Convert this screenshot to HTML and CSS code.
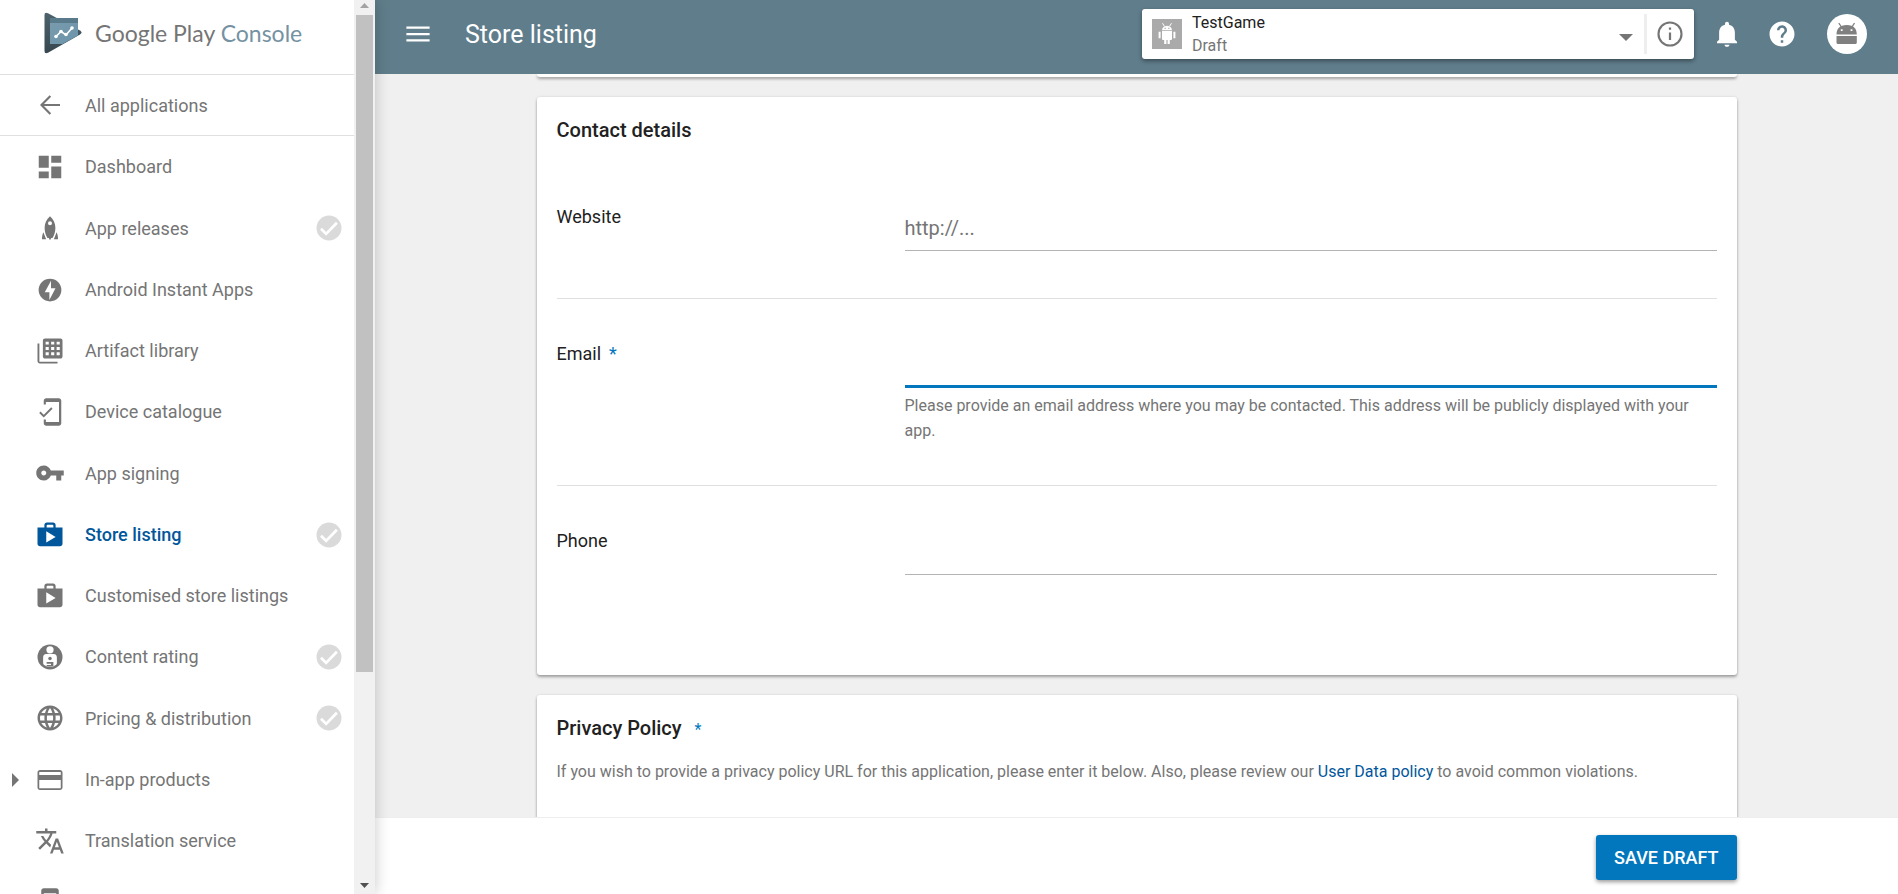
FILE: index.html
```html
<!DOCTYPE html>
<html lang="en-GB">
<head>
<meta charset="utf-8">
<title>Store listing - Google Play Console</title>
<link rel="stylesheet" href="styles.css">
</head>
<body>
<svg class="defs" aria-hidden="true">
  <symbol id="check" viewBox="0 0 24 24"><circle cx="12" cy="12" r="10" fill="#dadada"/><path d="M5.600 12.600l4.100 4.100 8.600-8.900" fill="none" stroke="#fff" stroke-width="2.200"/></symbol>
  <symbol id="shop" viewBox="0 0 24 24"><path fill-rule="evenodd" d="M16.500 6V4c0-1.110-.89-2-2-2h-5c-1.110 0-2 .89-2 2v2H2v13c0 1.110.89 2 2 2h16c1.110 0 2-.89 2-2V6zM9.300 5.900V4.600q0-.8.8-.8h3.800q.8 0 .8.8v1.300zM9 18V9l7.500 4.500z"/></symbol>
</svg>
<div class="shell">
  <aside class="sidebar">
    <div class="sidebar-content">
      <a class="brand" href="#">
        <svg class="brand-mark" viewBox="0 0 38 42" aria-hidden="true">
          <defs><linearGradient id="dark" x1="0" y1="0" x2="0" y2="1"><stop offset="0" stop-color="#4d626c"/><stop offset="1" stop-color="#37474f"/></linearGradient><linearGradient id="pane" x1="0" y1="0" x2="1" y2="1"><stop offset="0" stop-color="#7a9bad"/><stop offset="1" stop-color="#6b94ab"/></linearGradient></defs>
          <path fill="url(#dark)" d="M.500 3Q.5-.5 4 1.200L36 18.500Q39 20.500 36 22.500L4 40.800Q.5 42.300.5 39z"/>
          <path fill="url(#pane)" d="M6 6h28v17.500L18.500 32H6z"/><path fill="#587a8b" d="M6 6h28v5H6z"/>
          <path d="M12 24.500l5-5 5 3.500 6-7" fill="none" stroke="#fff" stroke-width="1.600"/><g fill="#fff"><circle cx="12" cy="24.500" r="1.800"/><circle cx="17" cy="19.500" r="1.800"/><circle cx="22" cy="22.500" r="1.800"/><circle cx="28" cy="16" r="1.800"/></g>
        </svg>
        <span class="brand-name">Google Play <span class="brand-product">Console</span></span>
      </a>
      <a class="nav-item nav-back" href="#">
        <svg class="icon" viewBox="0 0 24 24"><path d="M20 12H5.300M12.300 4.800L5.200 12l7.100 7.200" fill="none" stroke="currentColor" stroke-width="1.700"/></svg>
        <span>All applications</span>
      </a>
      <nav class="nav">
        <a class="nav-item" href="#"><svg class="icon" viewBox="0 0 24 24"><path d="M3 12.500h8V3H3zM3 21h8v-5.500H3zM13 21h8V11.500h-8zM13 3v5.500h8V3z"/></svg><span>Dashboard</span></a>
        <a class="nav-item" href="#"><svg class="icon" viewBox="0 0 24 24"><path fill-rule="evenodd" d="M12 2.500c2.800 2.500 4.300 5.700 4.300 9.300 0 3-.8 5.800-2.300 8.200h-4c-1.500-2.400-2.300-5.200-2.300-8.200C7.700 8.200 9.200 5 12 2.500zM12 6.600a1.600 1.600 0 1 0 0 3.200 1.600 1.600 0 0 0 0-3.200z"/><path d="M6.700 15.300L8.900 21H5.600c0-2 .2-4 1.100-5.700zM17.300 15.300L15.100 21h3.300c0-2-.2-4-1.100-5.700zM10.500 19h3l-1.500 2.800z"/></svg><span>App releases</span><svg class="icon status" role="img" aria-label="Complete"><use href="#check"/></svg></a>
        <a class="nav-item" href="#"><svg class="icon" viewBox="0 0 24 24"><path fill-rule="evenodd" d="M12 2.900a9.100 9.100 0 1 0 0 18.200 9.100 9.100 0 0 0 0-18.200zM11.500 20v-6.300H7.800L12.800 4.500v6h3.600z"/></svg><span>Android Instant Apps</span></a>
        <a class="nav-item" href="#"><svg class="icon" viewBox="0 0 24 24"><path d="M3.500 6H2v14c0 1.100.9 2 2 2h14v-1.500H3.500z"/><path fill-rule="evenodd" d="M8 2h12.300c1 0 1.700.7 1.700 1.700V16.300c0 1-.7 1.700-1.700 1.700H8c-1 0-1.700-.7-1.700-1.700V3.700C6.300 2.700 7 2 8 2zM8.500 4.500v2.300h2.500V4.500zM12.900 4.500v2.300h2.500V4.500zM17.300 4.500v2.300h2.500V4.500zM8.500 8.700v2.400h2.500V8.700zM12.900 8.700v2.400h2.500V8.700zM17.300 8.700v2.400h2.500V8.700zM8.500 13v2.400h2.500V13zM12.900 13v2.400h2.500V13zM17.300 13v2.400h2.500V13z"/></svg><span>Artifact library</span></a>
        <a class="nav-item" href="#"><svg class="icon" viewBox="0 0 24 24"><path d="M19 1H9c-1.100 0-2 .9-2 2v3h1.700V4H19.200v16H8.700v-2H7v3c0 1.100.9 2 2 2h10c1.100 0 2-.9 2-2V3c0-1.100-.9-2-2-2z"/><path d="M3.900 12.200L7 15.300l6.500-6.500" fill="none" stroke="currentColor" stroke-width="1.500"/></svg><span>Device catalogue</span></a>
        <a class="nav-item" href="#"><svg class="icon" viewBox="0 0 24 24"><path d="M12.650 10C11.830 7.670 9.610 6 7 6c-3.310 0-6 2.690-6 6s2.690 6 6 6c2.610 0 4.830-1.670 5.650-4H17v4h4v-4h2v-4H12.650zM7 14c-1.100 0-2-.9-2-2s.9-2 2-2 2 .9 2 2-.9 2-2 2z"/></svg><span>App signing</span></a>
        <a class="nav-item current" href="#" aria-current="page"><svg class="icon"><use href="#shop"/></svg><span>Store listing</span><svg class="icon status" role="img" aria-label="Complete"><use href="#check"/></svg></a>
        <a class="nav-item" href="#"><svg class="icon"><use href="#shop"/></svg><span>Customised store listings</span></a>
        <a class="nav-item" href="#"><svg class="icon" viewBox="0 0 24 24"><circle cx="12" cy="12" r="10"/><circle cx="12" cy="6.200" r="2.900" fill="#fff"/><path fill="#fff" d="M9 9.600h6c1.600 0 2.500 1.200 2.500 2.800v4.300c0 1.200-.9 1.900-2 2.200-1 1.300-6 1.300-7 0-1.100-.3-2-1-2-2.200v-4.300c0-1.600.9-2.800 2.500-2.800z"/><circle cx="12" cy="13.200" r="1.400"/><path d="M9.300 16h5.400v3.600H9.300v-1.300h3.500v-.9H9.300z"/></svg><span>Content rating</span><svg class="icon status" role="img" aria-label="Complete"><use href="#check"/></svg></a>
        <a class="nav-item" href="#"><svg class="icon" viewBox="0 0 24 24"><path d="M11.990 2C6.470 2 2 6.480 2 12s4.470 10 9.990 10C17.520 22 22 17.520 22 12S17.520 2 11.990 2zm6.930 6h-2.950c-.32-1.250-.78-2.450-1.380-3.560 1.840.63 3.370 1.910 4.330 3.560zM12 4.040c.83 1.200 1.480 2.530 1.910 3.960h-3.820c.43-1.430 1.080-2.760 1.910-3.960zM4.260 14C4.100 13.360 4 12.690 4 12s.1-1.360.26-2h3.380c-.08.66-.14 1.320-.14 2 0 .68.060 1.340.14 2H4.260zm.82 2h2.950c.32 1.250.78 2.450 1.380 3.560-1.840-.63-3.370-1.900-4.330-3.560zm2.950-8H5.080c.96-1.660 2.490-2.930 4.330-3.560C8.810 5.550 8.350 6.750 8.030 8zM12 19.960c-.83-1.200-1.480-2.530-1.910-3.960h3.820c-.43 1.430-1.080 2.760-1.910 3.960zM14.340 14H9.660c-.09-.66-.16-1.320-.16-2 0-.68.070-1.350.16-2h4.680c.09.65.16 1.320.16 2 0 .68-.07 1.340-.16 2zm.25 5.560c.6-1.110 1.060-2.310 1.380-3.560h2.950c-.96 1.650-2.490 2.930-4.330 3.560zM16.360 14c.08-.66.14-1.320.14-2 0-.68-.06-1.340-.14-2h3.380c.16.640.26 1.310.26 2s-.1 1.360-.26 2h-3.380z"/></svg><span>Pricing &amp; distribution</span><svg class="icon status" role="img" aria-label="Complete"><use href="#check"/></svg></a>
        <a class="nav-item" href="#"><svg class="expander" viewBox="0 0 7 14"><path d="M0 0l7 7-7 7z"/></svg><svg class="icon" viewBox="0 0 24 24"><path d="M20 4H4c-1.110 0-1.990.89-1.990 2L2 18c0 1.110.89 2 2 2h16c1.110 0 2-.89 2-2V6c0-1.110-.89-2-2-2zm.600 14.600H3.400V12h17.200v6.600zm0-10.600H3.400V5.500h17.200V8z"/></svg><span>In-app products</span></a>
        <a class="nav-item" href="#"><svg class="icon" viewBox="0 0 24 24"><path d="M12.870 15.070l-2.540-2.510.03-.03c1.740-1.940 2.980-4.170 3.710-6.530H17V4h-7V2H8v2H1v1.990h11.170C11.500 7.920 10.440 9.750 9 11.350 8.070 10.320 7.300 9.190 6.690 8h-2c.73 1.630 1.730 3.170 2.980 4.560l-5.090 5.020L4 19l5-5 3.110 3.110.76-2.040zM18.500 10h-2L12 22h2l1.120-3h4.750L21 22h2l-4.500-12zm-2.620 7l1.620-4.330L19.120 17h-3.240z"/></svg><span>Translation service</span></a>
        <a class="nav-item" href="#"><svg class="icon" viewBox="0 0 24 24"><path d="M17 1H7c-1.100 0-2 .9-2 2v18c0 1.100.9 2 2 2h10c1.100 0 2-.9 2-2V3c0-1.100-.9-2-2-2zm0 18H7V5h10z"/></svg></a>
      </nav>
    </div>
    <div class="scrollbar" aria-hidden="true">
      <svg class="scroll-arrow" viewBox="0 0 21 15"><path d="M6 8l4.500-5L15 8z" fill="#a3a3a3"/></svg>
      <div class="scroll-track"><div class="scroll-thumb"></div></div>
      <svg class="scroll-arrow" viewBox="0 0 21 15"><path d="M6 4l4.500 5L15 4z" fill="#505050"/></svg>
    </div>
  </aside>
  <div class="page">
    <header class="topbar">
      <button class="icon-button" type="button" aria-label="Menu"><svg class="icon" viewBox="0 0 24 24"><path d="M2.700 6h18.600v1.800H2.700zM2.700 11.100h18.600v1.800H2.700zM2.700 16.200h18.600V18H2.700z"/></svg></button>
      <h1 class="title">Store listing</h1>
      <div class="app-picker">
        <button class="app-select" type="button" aria-haspopup="listbox">
          <svg class="app-icon" viewBox="0 0 30 30"><path fill="#aaa" d="M0 0h30v30H0z"/><g fill="#fff"><path fill-rule="evenodd" d="M10 11.200q.3-4 5-4.400 4.700.4 5 4.400zM12.600 8.800v1.100h1.100V8.800zM16.300 8.800v1.100h1.100V8.800z"/><path d="M10 12h10v8q0 1-1 1h-1.200v4h-2.200v-4h-1.200v4h-2.200v-4H11q-1 0-1-1zM6.600 12.700h2v6.500h-2zM21.400 12.700h2v6.500h-2z"/><path d="M10.500 4.200l2 3.200M19.500 4.200l-2 3.200" stroke="#fff"/></g></svg>
          <span class="app-text"><span class="app-name">TestGame</span><span class="app-status">Draft</span></span>
          <svg class="caret" viewBox="0 0 14 7"><path d="M0 0h14L7 7z"/></svg>
        </button>
        <button class="icon-button app-info" type="button" aria-label="App information"><svg class="icon" viewBox="0 0 24 24"><circle cx="12" cy="12" r="9.200" fill="none" stroke="currentColor" stroke-width="1.700"/><path d="M11.100 6.700h1.800v1.800h-1.800zM11.100 10.800h1.800v6h-1.800z"/></svg></button>
      </div>
      <div class="top-actions">
        <button class="icon-button" type="button" aria-label="Notifications"><svg class="icon" viewBox="0 0 24 24"><path d="M12 22.200c1.100 0 2-.7 2-1.700h-4c0 1 .9 1.700 2 1.700zM18.300 16.500V11c0-3.200-1.600-5.700-4.700-6.400V3.700a1.600 1.600 0 0 0-3.200 0v.9C7.300 5.300 5.700 7.800 5.700 11v5.500L4 18.200v1.200h16v-1.200z"/></svg></button>
        <button class="icon-button" type="button" aria-label="Help"><svg class="icon" viewBox="0 0 24 24"><path d="M12 2C6.480 2 2 6.480 2 12s4.480 10 10 10 10-4.480 10-10S17.520 2 12 2zm1 17h-2v-2h2v2zm2.070-7.750l-.9.920C13.450 12.900 13 13.500 13 15h-2v-.5c0-1.100.45-2.100 1.170-2.830l1.240-1.260c.37-.36.590-.86.590-1.410 0-1.100-.9-2-2-2s-2 .9-2 2H8c0-2.210 1.790-4 4-4s4 1.790 4 4c0 .88-.36 1.680-.93 2.250z"/></svg></button>
        <button class="icon-button avatar" type="button" aria-label="Account"><svg viewBox="0 0 40 40"><circle cx="20" cy="20" r="20" fill="#fff"/><path fill-rule="evenodd" d="M9.500 20.500c0-5.500 3-9.500 10.300-9.500s10 4 10 9.500zM13.800 15.200v1.800h1.800v-1.800zM23.600 15.200v1.800h1.800v-1.800zM9.500 22h20.300v6.500q0 1.500-1.500 1.500H11q-1.500 0-1.500-1.500z"/><path d="M11.800 9.200l3 4.300M27.500 9.200l-3 4.300" stroke="currentColor" stroke-width="1.300"/></svg></button>
      </div>
    </header>
    <main class="content">
      <div class="column">
        <section class="card card-end"></section>
        <section class="card">
          <h2 class="card-title">Contact details</h2>
          <form class="fields">
            <div class="field"><label class="label" for="website">Website</label><div class="control"><input class="input" id="website" type="url" placeholder="http://..."></div></div>
            <div class="field"><label class="label" for="email">Email<span class="required">*</span></label><div class="control"><input class="input focused" id="email" type="email" aria-describedby="email-hint"><p class="hint" id="email-hint">Please provide an email address where you may be contacted. This address will be publicly displayed with your app.</p></div></div>
            <div class="field"><label class="label" for="phone">Phone</label><div class="control"><input class="input" id="phone" type="tel"></div></div>
          </form>
        </section>
        <section class="card card-policy">
          <h2 class="card-title">Privacy Policy<span class="required">*</span></h2>
          <p class="policy-text">If you wish to provide a privacy policy URL for this application, please enter it below. Also, please review our <a class="link" href="#">User Data policy</a> to avoid common violations.</p>
        </section>
      </div>
    </main>
    <footer class="footer"><div class="column footer-row"><button class="save" type="button">SAVE DRAFT</button></div></footer>
  </div>
</div>
</body>
</html>
```
FILE: styles.css
```css
* { box-sizing: border-box; }
body {
  margin: 0;
  font-family: Roboto, "Liberation Sans", sans-serif;
  font-size: 16px;
  color: #212121;
  background: #f0f0f0;
}
button { border: 0; padding: 0; background: none; font: inherit; color: inherit; text-align: left; }
svg { display: block; fill: currentColor; }
.defs { position: absolute; width: 0; height: 0; }
.icon { width: 30px; height: 30px; flex: none; }

.shell { display: flex; height: 100vh; overflow: hidden; }

.sidebar {
  display: flex;
  flex: none;
  width: 375px;
  background: #fff;
  box-shadow: 0 0 14px rgba(0, 0, 0, 0.22);
  z-index: 1;
}
.sidebar-content { flex: 1; overflow: hidden; }
.brand {
  display: flex;
  align-items: center;
  height: 75px;
  padding: 0 0 8px 44px;
  gap: 13px;
  border-bottom: 1px solid #e0e0e0;
  text-decoration: none;
}
.brand-mark { width: 38px; height: 42px; }
.brand-name { font-family: Lato, sans-serif; font-size: 23px; color: #757575; white-space: nowrap; }
.brand-product { color: #7492a2; }
.nav-item {
  display: flex;
  align-items: center;
  height: 61px;
  padding: 0 10px 0 35px;
  gap: 20px;
  color: #757575;
  font-size: 18px;
  text-decoration: none;
}
.nav .nav-item:nth-child(4n + 2) { height: 62px; }
.nav-back { border-bottom: 1px solid #e0e0e0; }
.current { color: #01579b; font-weight: 500; }
.status { margin-left: auto; }
.expander { flex: none; width: 7px; height: 14px; margin: 0 -4px 0 -23px; }

.scrollbar { display: flex; flex-direction: column; flex: none; width: 21px; background: #f1f1f1; }
.scroll-arrow { width: 21px; height: 15px; }
.scroll-track { flex: 1; padding: 0 2px; }
.scroll-thumb { height: 76%; background: #c1c1c1; }

.page { display: flex; flex-direction: column; flex: 1; min-width: 0; }
.topbar {
  display: flex;
  align-items: center;
  height: 74px;
  flex: none;
  padding: 0 31px 6px 28px;
  background: #607d8b;
  color: #fff;
}
.title { flex: 1; margin: 0 0 0 32px; font-size: 25px; font-weight: 400; }
.app-picker {
  display: flex;
  align-items: center;
  width: 552px;
  height: 50px;
  margin-right: 18px;
  border-radius: 3px;
  background: #fff;
  box-shadow: 0 2px 4px rgba(0, 0, 0, 0.4);
  color: #757575;
}
.app-select { display: flex; align-items: center; flex: 1; height: 40px; padding: 0 11px 0 10px; border-right: 3px solid #eee; }
.app-icon { width: 30px; height: 30px; }
.app-text { display: grid; flex: 1; margin-left: 10px; line-height: 23px; }
.app-name { color: #212121; }
.caret { width: 14px; height: 7px; margin-top: 6px; }
.app-info { padding: 0 9px 0 8px; }
.top-actions { display: flex; align-items: center; gap: 25px; }
.avatar { margin-left: 5px; width: 40px; height: 40px; color: #808080; }

.content { flex: 1; min-height: 0; padding: 0 20px; overflow: hidden; }
.column { width: 100%; max-width: 1200px; margin: 0 auto; }
.card {
  margin-bottom: 20px;
  padding: 20px;
  border-radius: 3px;
  background: #fff;
  box-shadow: 0 2px 3px rgba(0, 0, 0, 0.32), 0 0 3px rgba(0, 0, 0, 0.1);
}
.card-end { height: 3px; padding: 0; border-radius: 0 0 3px 3px; }
.card-title { margin: 0; font-size: 20px; font-weight: 500; line-height: 26px; }
.required { margin-left: 8px; color: #0277bd; }
.card-title .required { margin-left: 13px; font-size: 16px; font-weight: 400; }
.fields { padding: 19px 0 54px; }
.field { display: grid; grid-template-columns: 348px 1fr; padding-bottom: 42px; border-bottom: 1px solid #e0e0e0; }
.field:last-child { padding-bottom: 21px; border-bottom: 0; }
.label { padding-top: 43px; font-size: 18px; line-height: 24px; }
.control { padding-top: 43px; }
.input {
  display: block;
  width: 100%;
  height: 46px;
  margin-bottom: 5px;
  padding: 1px 0 0;
  border: 0;
  border-bottom: 1px solid #b4b4b4;
  outline: 0;
  background: none;
  font: 20px Roboto, "Liberation Sans", sans-serif;
  color: #212121;
}
.input::placeholder { color: #757575; opacity: 1; }
.focused { border-bottom: 3px solid #0277bd; }
.hint { margin: 0; color: #757575; line-height: 25px; }
.policy-text { margin: 16px 0 0; color: #757575; line-height: 25px; }
.link { color: #01579b; text-decoration: none; }
.card-policy { min-height: 200px; }

.footer { flex: none; padding: 17px 20px 14px; background: #fff; border-top: 1px solid #eee; }
.footer-row { display: flex; justify-content: flex-end; }
.save {
  height: 45px;
  padding: 0 18px;
  border-radius: 3px;
  background: #0277bd;
  box-shadow: 0 2px 4px rgba(0, 0, 0, 0.4);
  color: #fff;
  font-size: 18px;
  font-weight: 500;
}
```
